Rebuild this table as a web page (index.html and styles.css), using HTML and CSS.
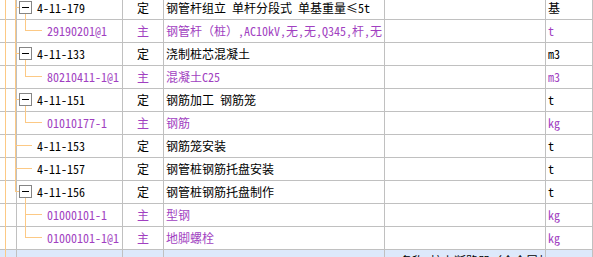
FILE: index.html
```html
<!DOCTYPE html>
<html lang="zh-CN">
<head>
<meta charset="utf-8">
<title>定额</title>
<link rel="stylesheet" href="styles.css">
</head>
<body>
<div class="grid">
  <div class="row">
    <div class="c tree"><span class="g0"></span><span class="g1"></span><span class="h1 short"></span><span class="box"></span><span class="vdown"></span>4-11-179</div>
    <div class="c type">定</div>
    <div class="c name">钢管杆组立 单杆分段式 单基重量≤5t</div>
    <div class="c spec"></div>
    <div class="c unit">基</div>
  </div>
  <div class="row sub">
    <div class="c tree child"><span class="g0"></span><span class="g1"></span><span class="vup"></span><span class="h2"></span>29190201@1</div>
    <div class="c type">主</div>
    <div class="c name">钢管杆（桩）,AC10kV,无,无,Q345,杆,无</div>
    <div class="c spec"></div>
    <div class="c unit">t</div>
  </div>
  <div class="row">
    <div class="c tree"><span class="g0"></span><span class="g1"></span><span class="h1 short"></span><span class="box"></span><span class="vdown"></span>4-11-133</div>
    <div class="c type">定</div>
    <div class="c name">浇制桩芯混凝土</div>
    <div class="c spec"></div>
    <div class="c unit">m3</div>
  </div>
  <div class="row sub">
    <div class="c tree child"><span class="g0"></span><span class="g1"></span><span class="vup"></span><span class="h2"></span>80210411-1@1</div>
    <div class="c type">主</div>
    <div class="c name">混凝土C25</div>
    <div class="c spec"></div>
    <div class="c unit">m3</div>
  </div>
  <div class="row">
    <div class="c tree"><span class="g0"></span><span class="g1"></span><span class="h1 short"></span><span class="box"></span><span class="vdown"></span>4-11-151</div>
    <div class="c type">定</div>
    <div class="c name">钢筋加工 钢筋笼</div>
    <div class="c spec"></div>
    <div class="c unit">t</div>
  </div>
  <div class="row sub">
    <div class="c tree child"><span class="g0"></span><span class="g1"></span><span class="vup"></span><span class="h2"></span>01010177-1</div>
    <div class="c type">主</div>
    <div class="c name">钢筋</div>
    <div class="c spec"></div>
    <div class="c unit">kg</div>
  </div>
  <div class="row">
    <div class="c tree"><span class="g0"></span><span class="g1"></span><span class="h1"></span>4-11-153</div>
    <div class="c type">定</div>
    <div class="c name">钢筋笼安装</div>
    <div class="c spec"></div>
    <div class="c unit">t</div>
  </div>
  <div class="row">
    <div class="c tree"><span class="g0"></span><span class="g1"></span><span class="h1"></span>4-11-157</div>
    <div class="c type">定</div>
    <div class="c name">钢管桩钢筋托盘安装</div>
    <div class="c spec"></div>
    <div class="c unit">t</div>
  </div>
  <div class="row">
    <div class="c tree"><span class="g0"></span><span class="g1 end"></span><span class="h1 short"></span><span class="box"></span><span class="vdown"></span>4-11-156</div>
    <div class="c type">定</div>
    <div class="c name">钢管桩钢筋托盘制作</div>
    <div class="c spec"></div>
    <div class="c unit">t</div>
  </div>
  <div class="row sub">
    <div class="c tree child"><span class="g0"></span><span class="vup full"></span><span class="h2"></span>01000101-1</div>
    <div class="c type">主</div>
    <div class="c name">型钢</div>
    <div class="c spec"></div>
    <div class="c unit">kg</div>
  </div>
  <div class="row sub">
    <div class="c tree child"><span class="g0"></span><span class="vup"></span><span class="h2"></span>01000101-1@1</div>
    <div class="c type">主</div>
    <div class="c name">地脚螺栓</div>
    <div class="c spec"></div>
    <div class="c unit">kg</div>
  </div>
  <div class="row sel">
    <div class="c tree"><span class="g0"></span></div>
    <div class="c type"></div>
    <div class="c name"></div>
    <div class="c spec">1.名称:柱上断路器（全金属封闭）</div>
    <div class="c unit"></div>
  </div>
</div>
</body>
</html>
```

FILE: styles.css
```css
html, body {
  margin: 0;
  padding: 0;
  background: #ffffff;
  overflow: hidden;
}

body {
  width: 593px;
  height: 257px;
  font-family: "Noto Sans Mono CJK SC", "Noto Sans CJK SC", "DejaVu Sans Mono", monospace;
  font-size: 12px;
  color: #000000;
}

.grid {
  margin-top: -3px;
}

.row {
  display: grid;
  grid-template-columns: 123px 41px 221px 161px 47px;
  height: 23px;
}

.c {
  box-sizing: border-box;
  height: 23px;
  line-height: 22px;
  border-right: 1px solid #c0c0c0;
  border-bottom: 1px solid #c0c0c0;
  white-space: nowrap;
  overflow: hidden;
}

.sub .c {
  color: #a13fc1;
}

.sel .c {
  background: #dde9fb;
}

.type {
  text-align: center;
}

.name {
  padding-left: 2px;
}

.spec {
  padding-left: 3px;
}

.unit {
  padding-left: 2px;
}

/* tree column */
.tree {
  position: relative;
  padding-left: 37px;
  overflow: visible;
}

.tree.child {
  padding-left: 47px;
}

.tree::before {
  content: "";
  position: absolute;
  left: 16px;
  top: 0;
  bottom: -1px;
  width: 1px;
  background: #c0c0c0;
}

.g0, .g1, .vup, .vdown, .h1, .h2, .box {
  position: absolute;
  display: block;
}

.g0 {
  left: 5px;
  top: 0;
  bottom: -1px;
  width: 1px;
  background: #fcc985;
}

.g1 {
  left: 15px;
  top: 0;
  bottom: -1px;
  width: 1px;
  background: #fcc985;
}

.g1.end {
  bottom: auto;
  height: 11px;
}

.h1 {
  left: 15px;
  top: 10px;
  width: 17px;
  height: 1px;
  background: #fcc985;
}

.h1.short {
  width: 4px;
}

.box {
  left: 19px;
  top: 4px;
  width: 13px;
  height: 13px;
  box-sizing: border-box;
  border: 1px solid #858585;
  background: #ffffff;
}

.box::after {
  content: "";
  position: absolute;
  left: 2px;
  top: 5px;
  width: 7px;
  height: 1px;
  background: #000000;
}

.vdown {
  left: 25px;
  top: 17px;
  bottom: -1px;
  width: 1px;
  background: #fcc985;
}

.vup {
  left: 25px;
  top: 0;
  height: 11px;
  width: 1px;
  background: #fcc985;
}

.vup.full {
  height: auto;
  bottom: -1px;
}

.h2 {
  left: 25px;
  top: 10px;
  width: 17px;
  height: 1px;
  background: #fcc985;
}
```
